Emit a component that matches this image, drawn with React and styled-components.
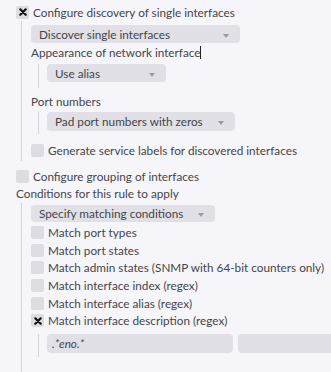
import React from "react";
import styled, { createGlobalStyle } from "styled-components";

const Global = createGlobalStyle`
  html, body { margin: 0; padding: 0; background: #f5f5fa; }
  body { font-family: Lato, "Liberation Sans", sans-serif; font-size: 11.75px; color: #454549; }
`;

const Page = styled.div`
  padding: 3px 0 0 16px;
  width: 331px;
  height: 372px;
  box-sizing: border-box;
  overflow: hidden;
`;

const Row = styled.div`
  display: flex;
  align-items: center;
  gap: 4px;
  height: ${(p) => p.$h || 18}px;
  margin-top: ${(p) => p.$mt || 0}px;
  white-space: nowrap;
`;

const Box = styled.span`
  width: 13px;
  height: 13px;
  flex: none;
  background: #dcdce2;
  border-radius: 2px;
  display: flex;
  align-items: center;
  justify-content: center;
`;

const Label = styled.div`
  height: 18px;
  line-height: 18px;
  white-space: nowrap;
  margin-top: ${(p) => p.$mt || 0}px;
`;

const Indent = styled.div`
  margin-left: ${(p) => p.$ml}px;
  padding-left: ${(p) => p.$pl}px;
  border-left: 1px solid #d4d4da;
  padding-bottom: ${(p) => p.$pb || 0}px;
  margin-top: ${(p) => p.$mt || 0}px;
  display: flex;
  flex-direction: column;
`;

const Select = styled.div`
  width: ${(p) => p.$w}px;
  height: ${(p) => p.$h || 18}px;
  box-sizing: border-box;
  background: #e0e0e6;
  border-radius: 4px;
  padding: 0 8px;
  display: flex;
  align-items: center;
  justify-content: space-between;
  margin-top: ${(p) => p.$mt || 0}px;
  margin-bottom: ${(p) => p.$mb || 0}px;
  white-space: nowrap;
`;

const Arrow = styled.span`
  width: 0;
  height: 0;
  border-left: 3px solid transparent;
  border-right: 3px solid transparent;
  border-top: 4px solid #9a9aa2;
  margin-top: 3px;
  margin-right: 3px;
`;

const Caret = styled.span`
  display: inline-block;
  width: 1px;
  height: 13px;
  background: #222;
  vertical-align: -2px;
`;

const Inputs = styled.div`
  display: flex;
  gap: 5px;
  margin-right: -120px;
`;

const TextInput = styled.div`
  width: ${(p) => p.$w}px;
  height: 19px;
  box-sizing: border-box;
  background: #e0e0e6;
  border-radius: 4px;
  padding: 0 5px;
  font-style: italic;
  line-height: 19px;
  flex: none;
`;

const Cross = () => (
  <svg width="8" height="8" viewBox="0 0 8 8">
    <path d="M1.3 1.3 L6.7 6.7 M6.7 1.3 L1.3 6.7" stroke="#111" strokeWidth="2.2" strokeLinecap="round" />
  </svg>
);

const Check = ({ on, children, h, mt }) => (
  <Row $h={h} $mt={mt}>
    <Box>{on && <Cross />}</Box>
    <span>{children}</span>
  </Row>
);

export default function App() {
  return (
    <Page>
      <Global />
      <Check on>Configure discovery of single interfaces</Check>
      <Indent $ml={5} $pl={9} $pb={2}>
        <Select $w={209} $mt={4}>
          <span>Discover single interfaces</span>
          <Arrow />
        </Select>
        <Label $mt={1}>
          Appearance of network interface<Caret />
        </Label>
        <Indent $ml={7} $pl={8} $pb={6} $mt={2}>
          <Select $w={119}>
            <span>Use alias</span>
            <Arrow />
          </Select>
        </Indent>
        <Label $mt={5}>Port numbers</Label>
        <Indent $ml={7} $pl={8} $pb={3} $mt={1}>
          <Select $w={188} $h={19}>
            <span>Pad port numbers with zeros</span>
            <Arrow />
          </Select>
        </Indent>
        <Check mt={7}>Generate service labels for discovered interfaces</Check>
      </Indent>
      <Check mt={6}>Configure grouping of interfaces</Check>
      <Label>Conditions for this rule to apply</Label>
      <Indent $ml={5} $pl={9} $pb={20}>
        <Select $w={184} $mt={2} $h={17}>
          <span>Specify matching conditions</span>
          <Arrow />
        </Select>
        <Check h={17.6} mt={2}>Match port types</Check>
        <Check h={17.6}>Match port states</Check>
        <Check h={17.6}>Match admin states (SNMP with 64-bit counters only)</Check>
        <Check h={17.6}>Match interface index (regex)</Check>
        <Check h={17.6}>Match interface alias (regex)</Check>
        <Check on h={17.6}>Match interface description (regex)</Check>
        <Indent $ml={7} $pl={8} $pb={4} $mt={4}>
          <Inputs>
            <TextInput $w={186}>.*eno.*</TextInput>
            <TextInput $w={200} />
          </Inputs>
        </Indent>
      </Indent>
    </Page>
  );
}
